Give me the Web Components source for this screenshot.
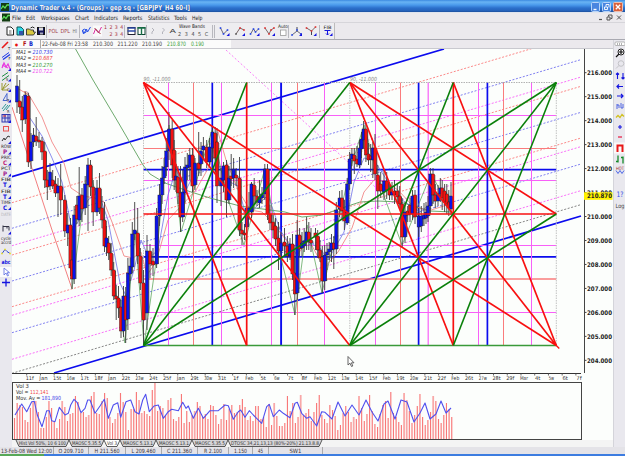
<!DOCTYPE html>
<html>
<head>
<meta charset="UTF-8">
<title>Dynamic Trader</title>
<style>
  html, body { margin: 0; height: 100%; overflow: hidden; }
  body { background: #ebe9ed; font-family: "DejaVu Sans Condensed", "DejaVu Sans", sans-serif; color: #444; }
</style>
</head>
<body>
<trader-app></trader-app>
<script>
const BLUE = '#0b0bee', RED = '#f81010', GREEN = '#0a800a', PINK = '#f860f8', ROSE = '#fa7c7c';

// shared base: subclasses return their styles and markup from render()
class Part extends HTMLElement {
  constructor() {
    super();
    this.attachShadow({ mode: 'open' });
  }
  connectedCallback() {
    this.shadowRoot.innerHTML = this.render();
  }
}

const txt = (x, y, s, len, size, fill, extra = '') =>
  `<text x="${x}" y="${y}" ${len ? `textLength="${len}" lengthAdjust="spacingAndGlyphs"` : ''} font-size="${size}" fill="${fill}" ${extra}>${s}</text>`;
const line = (x1, y1, x2, y2, c, w = 1, extra = '') =>
  `<path d="M${x1} ${y1}L${x2} ${y2}" stroke="${c}" stroke-width="${w}" fill="none" ${extra}/>`;
const poly = (pts, c, w = 1, extra = '') =>
  `<polyline points="${pts}" stroke="${c}" stroke-width="${w}" fill="none" ${extra}/>`;

// each icon is drawn around 0,0
const dots = (c, ...p) => p.map(([x, y]) => `<rect x="${x - .8}" y="${y - .8}" width="1.6" height="1.6" fill="${c}"/>`).join('');
const corner = '<path d="M5 2V5H2Z" fill="#1414e0"/>';
const word = (a, b, c) => txt(-5, -1.2, a, 10, 4.6, '#222') + txt(-1, 4.6, b, 0, 6.2, c, 'font-weight="bold" text-anchor="middle"') + corner;
const ICONS = {
  chart: '<rect x="-4" y="-4" width="8" height="8" fill="#123c12"/>' + poly('-4,2 -2,-1 0,1 2,-2 4,-2', '#5de05d', 1.3),
  page: '<path d="M-3 -4H1L3.5 -1.5V4H-3Z" fill="#fff" stroke="#222"/><path d="M-1 0H1.5M-1 2H1.5" stroke="#444" stroke-width=".8"/>',
  pages: '<path d="M-3 -4H1L3.5 -1.5V4H-3Z" fill="#2cd8e8" stroke="#155"/><path d="M-1 0H3V4H-1Z" fill="#35a"/>',
  folder: '<path d="M-4 4V-2H-1L0 -1H3V1H5L3 4Z" fill="#d8c840" stroke="#333" stroke-width=".9"/><path d="M0 -3Q2 -5 4 -3" stroke="#222" fill="none"/>',
  save: '<rect x="-3.5" y="-3.5" width="7" height="7" fill="#16165c" stroke="#111"/><rect x="-2" y="-3.5" width="4" height="3" fill="#ddd"/><rect x="-1" y="1.5" width="3" height="2" fill="#aab"/>',
  zigBlue: poly('-4,-1 -3,3 0,-2 1,1 4,-4', '#2850e8') + '<circle cx="-2" cy="0" r="1.8" fill="none" stroke="#2850e8"/>',
  zigPink: '<rect x="-4.5" y="-5.5" width="9" height="11" fill="#fafafa"/>' + poly('-4,3 -2,-2 1,2 4,-4', '#d82aa0') + poly('-3,-3 0,0 3,3', '#933'),
  rows: '<rect x="-3.5" y="-3.5" width="7" height="7" fill="#fff" stroke="#223"/><path d="M-4 -3H4M-4 0H4" stroke="#2a48a8" stroke-width="1.4"/>',
  cols: '<rect x="-3.5" y="-3.5" width="7" height="7" fill="#fff" stroke="#143"/><path d="M-4 -3H4M0 -4V4" stroke="#187048" stroke-width="1.4"/>',
  chev: poly('-1,-3 1,-1 -1,1 -1,3', '#b4b4bc'),
  swing1: poly('-4,-3 -1,3 3,-1', '#667') + dots('#2244e8', [-4, -3], [-1, 3], [3, -1]) + corner,
  swing2: poly('-4,3 0,-3 4,-1', '#766') + dots('#e03030', [0, -3], [4, -1]) + dots('#555', [-4, 3]) + corner,
  swing3: poly('-4,3 -1,-2 1,1 4,-2', '#667') + dots('#2244e8', [-4, 3], [-1, -2], [1, 1], [4, -2]) + corner,
  swing4: poly('-5,-3 -1,3 1,-1 4,-3', '#766') + dots('#e03030', [-5, -3], [-1, 3], [1, -1], [4, -3]) + corner,
  swing5: poly('-5,4 0,0 4,3', '#667') + line(0, 0, 0, -4, '#445') + dots('#2244e8', [-5, 4], [0, -1], [4, 3]) + corner,
  swing6: poly('-5,-3 0,0 4,-4', '#766') + line(0, 0, 0, 4, '#445') + dots('#e03030', [-5, -3], [0, 0], [4, -4]) + corner,
  auto: txt(-5, -2.6, 'Auto', 10, 4.8, '#222') + '<rect x="-2.5" y="-1" width="5.5" height="5.5" fill="#fff" stroke="#999" stroke-width=".8"/>',
  fib: txt(-4, -2, 'FIB', 8, 4.6, '#222') + '<path d="M-3 -.5H3M0 -.5V4M-1.5 2.5L0 4L1.5 2.5" stroke="#1414e0" fill="none"/>' + corner,
  // left strip
  redLine: line(-4, 3, 2, -3, '#e81818', 1.6) + txt(2, 4.5, 'T', 0, 4, '#222'),
  channel: line(-4, 2, 3, -3, '#2038e8') + line(-3, 4, 4, -1, '#2038e8', 1.4) + txt(2.5, 4.8, 'F', 0, 4, '#222'),
  pinkZig: poly('-4,2 -2,-3 0,1 2,-2 4,3', '#e838e0', 1.2) + line(-4, -1, 2, 2, '#e838e0') + corner,
  greenCh: line(-4, 0, 2, -4, '#1c8a40') + line(-4, 4, 3, -1, '#1c8a40') + txt(0, 4.6, 'S', 0, 4, '#333') + corner,
  fan: '<path d="M-4 3V-4M-4 3L0 -4M-4 3L3 -3M-4 3H2" stroke="#98982c" fill="none"/>' + txt(1, 4, 'G', 0, 4, '#333') + corner,
  tri: '<path d="M-3 3L1 -4V3Z" stroke="#4868d0" fill="none"/>' + txt(1, 4, 'R', 0, 4, '#224') + corner,
  teal: '<path d="M-4 1L0 -4M-3 3L2 -3M0 2L4 -3" stroke="#2f9a98" fill="none"/>' + txt(1, 4.8, 'R', 0, 4, '#333'),
  grid: '<rect x="-4" y="-3.5" width="8" height="7.5" fill="#dde" stroke="#3038b0"/><path d="M-4 0H4M-1 -4V4M2 -4V4" stroke="#3038b0"/><path d="M-3 -2H0" stroke="#d02030"/>' + corner,
  box: '<rect x="-2.5" y="-2" width="5" height="4.5" fill="none" stroke="#e85050"/>',
  zig: poly('-4,2 -2,-1 -1,1 2,-3 4,-2', '#333', 1) + corner,
  row: word('ROW', 'P', '#a01890'), pric: word('PRIC', 'C', '#c02078'), pct: word('PCT', 'P', '#a01890'),
  fibT: word('FIB', 'T', '#1414e0'), time: word('TIME', 'C', '#1414e0'),
  date: txt(-5, 1, 'DATE', 10, 4.4, '#b8b8bc'),
  tee: '<path d="M-3 -4V2M-3 -3H3V1M1 -3V-1" stroke="#334" fill="none"/>' + corner,
  cycle: txt(-5, -.6, 'cycle', 10, 4.6, '#222') + txt(-5, 3.8, 'accrd', 10, 4.6, '#222'),
  wave: poly('-4,2 -1,-2 1,0 4,2', '#3048d8') + dots('#e8e020', [-4, 2], [-1, -2], [4, 2]),
  abc: txt(-4.5, 2, 'abc', 9, 5.6, '#1414e0', 'font-weight="bold"'),
  arrow: '<rect x="-6" y="-5" width="11.5" height="10" fill="#fbfbfd"/><path d="M-2 -4V3L0 1L1.5 4L2.5 3.5L1.2 .7H3.5Z" fill="#fff" stroke="#5868e0" stroke-width=".8"/>',
  plus: '<path d="M-4 0H4M0 -4V4" stroke="#1414e0" stroke-width="1.3"/>',
  // right strip
  grip: '<rect x="-5" y="-2" width="10" height="3.5" rx="1" fill="#fff" stroke="#999" stroke-width=".7"/><path d="M-3 0H3" stroke="#666" stroke-dasharray="1 1"/>',
  lens: '<circle cx="1" cy="-1" r="3" fill="#fff" stroke="#222"/><path d="M-1 1L-4 4M-1 -1H3M1 -3V1" stroke="#111" stroke-width="1.2"/>',
  lensOff: '<circle cx="1" cy="-1" r="2.8" fill="none" stroke="#c4c4c8"/><path d="M-1 1L-4 4" stroke="#c4c4c8"/>',
  updown: '<path d="M-2.5 3V-3M-4 -1.5L-2.5 -3L-1 -1.5M3 -3V3M1.5 1.5L3 3L4.5 1.5" stroke="#1414e0" fill="none" stroke-width="1.1"/>',
  left: '<path d="M3 0H-3M-1 -2L-3 0L-1 2" stroke="#1414e0" fill="none" stroke-width="1.2"/>',
  right: '<path d="M-3 0H3M1 -2L3 0L1 2" stroke="#1414e0" fill="none" stroke-width="1.2"/>',
  bars: '<path d="M-3 -2V3M-3 -1H-1V2M1 -3V2H3V-2" stroke="#4058e0" fill="none" stroke-width=".9"/>',
  gold: poly('-4,1 -2,-1 0,1 2,-2 4,0', '#d0c020', 1.3),
  plusS: '<path d="M-2 0H2M0 -2V2" stroke="#1414e0" stroke-width="1.1"/>',
  minus: '<path d="M-2 0H2" stroke="#e81840" stroke-width="1.2"/>',
  magnet: '<rect x="-6" y="-5.5" width="12" height="11" fill="#fafafa"/><path d="M-2.5 4V-2.5H2.5V4" stroke="#e81818" fill="none" stroke-width="2"/>',
  ohlc: '<path d="M-2 -4V3M-4 2H-2M3 -3V4M1 -2H3" stroke="#148a28" fill="none" stroke-width="1.3"/>',
  hot: txt(-4, -.5, 'HOT', 8, 4.6, '#a02828') + poly('-4,0 -2,3 0,0 2,3 4,0', '#5068e8'),
  help: txt(-3.5, 2.8, '1?', 7, 7.5, '#3050e8'),
  log: txt(-4.5, 2, 'Log', 9, 6, '#444')
};

class ToolIcon extends Part {
  render() {
    const w = +this.getAttribute('w') || 12, h = +this.getAttribute('h') || 12;
    return `<style>:host{display:block;flex:none;width:${w}px;height:${h}px}svg{display:block;overflow:visible}</style>
      <svg width="${w}" height="${h}" viewBox="${-w / 2} ${-h / 2} ${w} ${h}">${ICONS[this.getAttribute('name')]}</svg>`;
  }
}
const icon = (name, w, h) => `<tool-icon name="${name}" w="${w}" h="${h}"></tool-icon>`;

class TitleBar extends Part {
  render() {
    return `<style>
      :host{display:flex;align-items:center;box-sizing:border-box;height:13px;padding:0 1px;gap:2px;color:#fff;
        background:linear-gradient(#3c8ae0 0,#69b4f4 2px,#4a9aec 5px,#2c70cc 8px,#2461b8 11px,#1c4c98 12px,#dfe4ee 12px)}
      svg{display:block} .t{width:184px;flex:none;overflow:visible} .sp{flex:1} .b{display:flex;gap:2px;padding-right:1px}
      text{text-shadow:.5px .5px 0 #123a80}
    </style>${icon('chart', 8, 10)}
    <svg class="t" height="12">${txt(0, 8.8, this.textContent, 179, 7, '#f2f7ff', 'font-weight="bold"')}</svg>
    <span class="sp"></span>
    <span class="b"><svg width="9" height="10"><rect x=".5" y=".5" width="8" height="9" rx="1" fill="#4a86e0" stroke="#b8d4f8"/><path d="M2.5 7.5H5.5" stroke="#fff" stroke-width="1.4"/></svg>
    <svg width="9" height="10"><rect x=".5" y=".5" width="8" height="9" rx="1" fill="#4a86e0" stroke="#b8d4f8"/><path d="M2.5 5H5.5V7.5H2.5ZM4 4.5V2.5H7V5.5" stroke="#fff" fill="none" stroke-width=".9"/></svg>
    <svg width="10" height="10"><rect x=".5" y=".5" width="9" height="9" rx="1" fill="#d8603c" stroke="#f0c0b0"/><path d="M2.8 2.8L7.2 7.2M7.2 2.8L2.8 7.2" stroke="#fff" stroke-width="1.3"/></svg></span>`;
  }
}

class MenuBar extends Part {
  render() {
    return `<style>
      :host{display:flex;height:9px;padding-left:2px;align-items:center;background:#ebe9ed}
      nav{display:grid;grid-template-columns:14px 15px 34px 19px 29px 25px 26px 18px 20px;padding-left:2px;flex:1}
      svg{display:block;height:9px;width:100%;overflow:visible} .w{width:27px;flex:none}
    </style>${icon('chart', 8, 9)}<nav>${[['File', 9], ['Edit', 9], ['Workspaces', 28.5], ['Chart', 14], ['Indicators', 24], ['Reports', 19.5], ['Statistics', 21.5], ['Tools', 13], ['Help', 10.5]]
      .map(([s, w]) => `<svg>${txt(0, 6.8, s, w, 6, '#222')}</svg>`).join('')}</nav>
    <svg class="w"><path d="M1 6.5H4" stroke="#555" stroke-width="1.2"/><path d="M9 4H12V7H9ZM10.5 3.5V2H14V5.5H12.5M19 2.5L23 6.5M23 2.5L19 6.5" stroke="#555" fill="none"/></svg>`;
  }
}

class ToolBar extends Part {
  render() {
    const sep = '<i></i>';
    const label = (s, w, c) => `<svg width="${w}" height="10">${txt(.5, 7.3, s, w - 2.5, 5.6, c)}</svg>`;
    const nums = '<svg width="21" height="16">' + [...'1234'].map((n, i) => txt(1 + i * 5.4, 6, n, 0, 5.2, '#a82838')).join('') +
      [...'234'].map((n, i) => txt(6.4 + i * 5.4, 13, n, 0, 5.2, '#a82838')).join('') + '</svg>';
    const waves = '<svg width="34" height="16">' + txt(1, 5, 'Wave Bands', 26, 5, '#222') +
      [...'2345C'].map((n, i) => txt(i * 6.7, 13, n, 0, 5.4, '#444')).join('') + '</svg>';
    return `<style>
      :host{display:flex;height:18px;box-sizing:border-box;border-bottom:1px solid #a9a9b1;border-top:1px solid #d6d5da}
      div{display:flex;align-items:center;height:16px;background:#eeedf0;padding-left:5px;border-right:1px solid #bbb}
      i{width:1px;height:13px;background:#b8b8be;flex:none;margin-right:1px} svg{display:block;flex:none;overflow:visible}
    </style><div>${icon('page', 10, 12)}${icon('pages', 10, 12)}${icon('folder', 11, 12)}${icon('save', 10, 12)}${sep}
      ${label('POL', 12, '#a03848')}${label('DPL', 12, '#a03848')}${label('HI', 7, '#777')}${sep}
      ${icon('zigBlue', 11, 12)}${icon('zigPink', 11, 12)}${nums}${sep}${icon('rows', 11, 12)}${icon('cols', 9, 12)}${sep}
      ${icon('chev', 10, 12)}${icon('chev', 11, 12)}${label('A', 9, '#444')}${waves}${sep}${sep}
      ${icon('swing1', 17, 12)}${icon('swing2', 14, 12)}${icon('swing3', 15, 12)}${icon('swing4', 16, 12)}${icon('auto', 10, 12)}${sep}
      ${icon('swing5', 14, 12)}${icon('swing6', 15, 12)}${sep}${icon('fib', 13, 12)}</div>`;
  }
}

class SideTools extends Part {
  render() {
    const list = this.textContent.trim().split(/\s+/).map(s => s.split(':'));
    return `<style>:host{display:flex;flex-direction:column;background:#e9e8ee;width:12px;overflow:hidden}
      :host([right]){border-left:1px solid #d4d4da;width:11px} </style>
      ${list.map(([n, h]) => n === 'gap' ? `<div style="flex:none;height:${h}px"></div>` : icon(n, 12, h)).join('')}`;
  }
}

class InfoRow extends Part {
  render() {
    const t = [['●', 15, 3, '#e81010', 4], ['F', 23, 3.5, '#b01010', 6.4], ['B', 29, 4, '#1428c8', 6.4], ['22-Feb-08 Fri 23:58', 42, 46, '#443c40', 6],
      ['210.300', 93, 20, '#443c40', 6], ['211.220', 117.5, 20, '#443c40', 6], ['210.190', 142, 20, '#443c40', 6], ['210.870', 167, 19, '#38a038', 6], ['0.190', 191, 13, '#38a038', 6]];
    return `<style>:host{display:block;height:8px;border-bottom:1px solid #c9c9cf;background:#ebe9ed} svg{display:block}</style>
      <svg width="600" height="8" viewBox="12 0 600 8"><rect x="12" width="219" height="8" fill="#fbfbfb"/>
      <path d="M40.5 0V8" stroke="#aaa"/>${t.map(([s, x, w, c, f]) => txt(x, 6, s, w, f, c, f > 6.1 ? 'font-weight="bold"' : '')).join('')}</svg>`;
  }
}

// x, body top, body bottom, direction (1 = up), high, low
const CANDLES = [
  [17,86,102,1,75,113],[19.7,101,107,0,80,114],[22.3,107,120,0,96,132],[25.3,95,119,1,92,124],[28.4,96,162,0,93,167],[31,142,161,1,133,169],
  [33.5,135,142,1,128,147],[36.2,136,141,0,117,146],[39,140,142,0,132,148],[42,141,152,0,137,160],[44.7,151,180,0,142,188],[47.3,180,187,0,170,200],
  [50,172,186,1,163,190],[52.7,180,186,0,170,189],[55.5,184,193,0,176,197],[58,186,193,1,178,217],[60.7,186,200,0,164,215],[64.8,200,231,0,195,237],
  [67.7,225,233,1,213,246],[70.5,225,268,0,218,276],[72,260,279,0,250,289],[74.2,215,279,1,206,284],[76.8,205,219,0,196,224],[79.2,196,220,1,167,226],
  [82,195,209,0,188,222],[85.2,184,208,1,176,215],[88,165,185,1,158,231],[90.5,165,187,0,160,196],[93.2,187,212,0,180,226],[97,188,212,1,180,216],
  [99.5,188,208,0,173,214],[102,208,220,0,196,228],[104.5,220,246,0,202,252],[106.5,238,247,1,226,256],[108.7,243,253,0,236,260],[111.2,253,270,0,243,276],
  [113.7,270,296,0,262,300],[116.2,296,299,0,285,320],[118.5,298,308,0,286,318],[121,307,331,0,300,338],[123.5,296,331,1,286,337],[125.7,296,320,0,287,343],
  [127.9,273,319,1,258,330],[130.2,266,274,1,258,281],[132.3,234,267,1,222,273],[134.7,230,234,1,202,240],[137.7,233,256,0,208,264],[140.4,256,283,0,248,290],
  [143.5,283,320,0,270,345],[147,251,313,1,235,330],[150,251,264,0,244,278],[153,261,265,0,248,276],[156.6,216,264,1,208,268],[159.5,195,216,1,184,226],
  [162,178,195,1,166,204],[164.1,167,178,1,158,184],[166.3,151,167,1,138,176],[169,129,151,1,112,160],[172.2,129,165,0,120,178],[174.2,150,180,0,140,190],
  [176,176,180,1,164,192],[178,177,193,0,166,204],[180.5,193,217,0,166,232],[182.7,192,217,1,170,222],[185,167,193,1,157,203],[187.3,165,168,1,153,180],
  [189.8,155,167,1,148,180],[192.5,155,186,0,148,192],[195,163,185,1,158,190],[198.7,163,169,0,132,176],[201,151,164,1,142,176],[203.4,146,150,1,137,160],
  [206.7,147,162,0,140,168],[209.5,147,162,1,138,167],[212.5,132,148,1,126,160],[215.2,133,158,0,127,172],[217,142,186,0,128,203],[221,178,186,1,168,206],
  [223.5,166,180,1,162,192],[226.5,165,200,0,160,217],[229,178,200,1,166,204],[231.2,176,179,0,154,186],[233.6,169,178,1,158,188],[236.2,175,178,0,168,186],
  [239.5,178,230,0,157,236],[242,230,234,0,222,245],[244.5,233,235,0,224,240],[246.7,208,227,1,200,240],[249,208,211,1,192,220],[251.5,184,212,1,182,218],
  [254.2,185,196,0,178,204],[257,196,202,0,190,206],[259.5,197,203,1,180,208],[262,194,198,1,187,204],[264.8,169,194,1,164,200],[267.5,169,214,0,164,220],
  [270,214,223,0,205,230],[273,222,230,0,215,238],[275.5,226,239,0,218,246],[278.5,238,251,0,222,270],[281,243,251,1,232,258],[284.5,242,246,0,228,256],
  [287.4,246,256,0,236,262],[290,244,256,1,238,260],[292.5,244,274,0,234,280],[294.8,273,294,0,258,315],[297.2,235,293,1,220,300],[299.6,235,249,0,228,256],
  [302,243,248,1,232,256],[304.2,241,246,1,228,252],[306.6,232,242,1,217,250],[308.8,232,241,0,222,250],[311,240,243,0,228,252],[315.5,233,237,0,228,250],
  [317.7,236,250,0,230,258],[320,250,258,0,240,262],[322.3,257,281,0,246,293],[324.7,255,281,1,245,290],[327,252,255,1,243,270],[329.2,249,252,1,242,260],
  [331.5,243,250,1,234,262],[333.8,243,249,0,236,269],[336.3,210,249,1,202,254],[339.6,198,209,1,191,217],[342,198,211,0,190,220],[344.4,210,221,0,200,230],
  [347.2,184,223,1,178,225],[349.6,159,184,1,152,190],[351.9,154,159,1,148,166],[354.3,155,161,0,148,174],[357,159,164,0,146,167],[359.5,148,165,1,140,168],
  [361.5,139,149,1,132,158],[363.6,129,140,1,121,148],[365.9,129,155,0,122,162],[368.5,154,160,0,143,165],[370.7,156,159,0,144,172],[372.8,148,160,1,142,178],
  [375,148,174,0,134,180],[377.8,175,191,0,165,209],[380.7,184,191,0,172,198],[384,181,192,1,170,200],[386.7,181,190,0,172,199],[389.5,189,195,0,182,200],
  [392,192,195,1,182,200],[394.5,191,195,0,180,204],[397.3,191,197,0,184,204],[399.7,196,204,0,186,210],[402.2,204,237,0,198,247],[405,212,237,1,202,243],
  [407.7,211,215,0,206,222],[410,205,214,0,198,222],[412.5,196,214,1,190,220],[415,195,217,0,190,224],[418.7,216,227,1,208,237],[421.3,216,226,1,206,232],
  [424,215,219,1,203,226],[426,212,218,1,202,224],[428,206,216,1,196,222],[430.4,174,206,1,168,214],[433,174,195,0,168,204],[435.3,195,201,0,184,208],
  [438,194,201,1,185,206],[440.3,188,194,1,178,202],[442.2,188,198,0,180,210],[444.6,191,202,0,184,212],[446.8,194,204,0,184,214],[448.8,202,208,0,190,216],[451,196,209,1,182,215]
];

class PriceChart extends Part {
  render() {
    let s = '';
    // parallels of the channel, y taken at the left edge
    [[202.7, ROSE], [228.3, '#7272ee'], [245.7, PINK], [255, ROSE], [281, '#7272ee'], [306.7, ROSE], [315.3, PINK], [332.7, '#7272ee'], [359.3, PINK], [373.3, '#777']]
      .forEach(([y, c]) => s += line(12, y, 581, y - 168.7, c, .9, 'stroke-dasharray="2 1.6"'));
    s += line(226, 50, 385, 196, PINK, .8, 'stroke-dasharray="2 2"');
    s += line(12, 176.7, 444, 49, BLUE, 1.7) + line(54, 373, 581, 216, BLUE, 1.7);

    // time and price divisions of the squares
    const L = 143.5, M = 349.8, R = 556.3, T = 82.5, B = 345.5, H1 = 246.7, H2 = 453.3, C = 214;
    [[115.5, PINK, 1], [148.5, ROSE, 1], [180.5, PINK, 1], [245.5, PINK, 1], [279, ROSE, 1.3], [312.5, PINK, 1], [169.6, BLUE, 1.6], [256.8, BLUE, 1.8]]
      .forEach(([y, c, w]) => s += line(L, y, R, y, c, w));
    [[168.5, PINK], [193.5, ROSE], [221.5, PINK], [271.5, PINK], [297.5, ROSE], [324.5, PINK], [375.5, PINK], [400.5, ROSE], [428.2, PINK, 1.2], [478.5, PINK], [503.5, ROSE], [531.5, PINK],
      [212.3, BLUE, 1.7], [281.1, BLUE, 1.9], [418.6, BLUE, 1.7], [487.4, BLUE, 1.7]]
      .forEach(([x, c, w]) => s += line(x, T, x, B, c, w || 1));
    s += line(L, T, R, T, '#aaa', .9, 'stroke-dasharray="1.5 1"');
    [L, M, R].forEach(x => s += line(x, T, x, B, '#bbb', .9, 'stroke-dasharray="1.5 1"'));

    // moving averages and swing lines
    s += poly('75,48 93,80 118,122 143,165 150,174 165,183 185,190 210,198 240,206 270,210 285,212 302,217 322,215 345,207 360,202 378,201 400,202 430,211 452,212', '#5ea05e', .9);
    s += poly('12,107 52,230 71.7,288', '#f07070', .9);
    s += poly('17,88 29,95 42,117 52,142 64,163 71,188 83,196 95,198 104,202 112,222 124,256 133,258 141,252 147,275 156,262 168,220 182,205 196,190 210,165 218,132 226,160 238,190 250,210 262,212 272,222 286,240 297,255 309,240 324,268 338,252 352,228 364,192 374,180 386,182 398,190 412,205 428,211 450,204', '#f07878', .8);
    s += poly('30,118 42,136 52,158 62,182 67,205 72,230 78,222 88,200 98,192 108,220 120,283 126,296 134,270 141,240 149,258 158,250 168,195 176,170 186,190 196,170 208,154 216,160 226,180 238,186 246,216 258,205 268,195 280,230 294,250 304,240 320,248 328,260 344,232 354,182 364,158 374,160 388,182 402,200 420,212 436,200 452,202', '#6f70e8', .8);
    s += poly('72,289 88,166 102,215 125,343 135,231 144,345 156,262 169,125 181,232 212,130 228,200 244,245 265,168 279,250 295,315 307,225 322,293 350,170 364,125 380,185 402,245 431,174 451,209', '#4c9c4c', .7);

    for (const [x, a, b, up, hi, lo] of CANDLES) {
      s += line(x, hi, x, lo, '#3c3c3c', .9);
      s += line(x + 1.8, a + 1, x + 1.8, b, '#444', .8);
      s += `<rect x="${x - 1.6}" y="${a}" width="3.1" height="${Math.max(b - a, 1.5)}" fill="${up ? '#0a12ea' : '#f41010'}" stroke="#222" stroke-width=".4"/>`;
    }

    // main levels and fans stay above the candles
    s += line(L, C, R, C, RED, 1.7) + line(H1, T, H1, B, RED, 1.7) + line(H2, T, H2, B, RED, 1.7) + line(L, B, R, B, '#3a9a3a', 1.3);
    [[L, T, H1, B], [L, T, M, B], [L, T, R, B], [M, T, H2, B], [M, T, R, B], [M, T, R, C], [H2, T, R, B]].forEach(p => s += line(...p, RED, 1.7));
    [[L, B, H1, T], [L, B, M, T], [L, B, R, T], [M, B, H2, T], [M, B, R, T], [M, B, R, C], [H2, B, R, T]].forEach(p => s += line(...p, GREEN, 1.6));
    s += line(R - 4, B - 4, R + 3, B + 3, RED, 1.3);

    s += txt(143.5, 80.8, '90, -11.000', 27, 5.6, '#888', 'font-style="italic"') + txt(350, 80.8, '90, -11.000', 27, 5.6, '#888', 'font-style="italic"');
    [['MA1', '210.730', '#3838e8'], ['MA2', '210.687', '#f04040'], ['MA3', '210.270', '#389838'], ['MA4', '210.722', '#f048f0']].forEach(([n, v, c], i) => {
      s += txt(16, 54 + i * 6.3, n + ' =', 15.5, 5.6, '#333', 'font-style="italic"') + txt(32.5, 54 + i * 6.3, v, 20, 5.6, c, 'font-style="italic"');
    });
    s += txt(24, 95, 'Th', 5, 5, '#944');

    // price scale
    s += line(584.5, 49, 584.5, 373, '#444', 1);
    for (let i = 0; i < 13; i++) {
      const y = 72.7 + i * 23.97;
      s += line(584.5, y, 586.5, y, '#444') + txt(587, y + 2.3, (216 - i) + '.000', 25, 6.3, '#222', 'font-weight="bold"');
    }
    s += '<rect x="584" y="192.3" width="28.5" height="7.5" fill="#fff200"/>' + txt(587, 198.3, '210.870', 25, 6.3, '#222', 'font-weight="bold"');

    // time scale
    s += line(12, 373.5, 581, 373.5, '#333', 1);
    const days = '11f Jan 15t 16w 17t 18f Jan 22t 23w 24t 25f Jan 29t 30w 31t 1f Feb 5t 6w 7t 8f Feb 12t 13w 14t 15f Feb 19t 20w 21t 22f Feb 26t 27w 28t 29f Mar 4t 5w 6t 7f'.split(' ');
    days.forEach((d, i) => {
      const x = 29.7 + i * 13.73;
      s += line(x - 3, 373, x - 3, 375.5, '#444', .8) + txt(x - d.length * 1.35, 380, d, d.length * 2.7, 5.3, '#333');
    });
    s += '<path d="M348 356.5V365L350 363.2L351.5 366.5L352.8 366L351.4 362.8H354Z" fill="#fff" stroke="#555" stroke-width=".9"/>';
    return `<style>:host{display:block;background:#fcfefc} svg{display:block}</style>
      <svg width="601" height="333" viewBox="12 49 601 333">${s}</svg>`;
  }
}

const VOLUME = [21,36,34,32,19,17,31,37,38,27,11,11,22,38,31,17,11,20,38,32,18,25,26,43,37,26,27,22,24,43,47,26,25,38,46,41,22,16,20,26,46,37,27,9,30,30,47,39,26,28,25,23,49,56,28,33,31,24,39,41,20,18,22,45,16,28,17,24,28,37,33,22,25,20,34,33,24,15,20,35,19,30,34,26,27,34,40,32,19,23,18,33,33,20,22,12,35,14,36,23,13,13,16,43,28,36,16,22,44,24,26,30,18,27,36,44,24,20,16,34,29,23,9,14,26,33,27,17,22,20,43,31,18,25,44,28,15,12,25,34,38,21,47,26,22,17,14,46,39,28,16,24,33,45,22,14,19,27,43,38,20,16,24,36,30,22];
const VOL_MA = '15,415 21.7,404 26.7,411.7 31.7,401.7 34.3,401.3 37.3,415 42,426.7 46.7,410.7 49.3,410.7 51.7,420.7 55,421.7 59.3,407.3 65,415 68.3,413.3 70.7,405 74,399.3 77.3,402.7 81,412.7 85,408.3 87.7,400 90,400 95,413.3 100,406 104.3,399.3 108.3,418.3 113.3,405 117.7,402.7 120.7,417.3 126,401.7 130.7,400 135,411.7 139,414 142.7,400 145.7,394.3 149.3,411.7 154,406 158.3,405 163.3,418.3 168.3,411.7 171.7,409.3 178.3,410.7 182.7,402.3 186,408.3 188.3,406 193.3,418.3 198.3,408.3 203.3,418.3 210,410.7 218.3,410.7 225,405 228.3,405.7 233.3,419.3 238.3,411.7 240.7,410 245,417.3 249.3,410.7 253.3,415 261.7,423.3 266.7,406.7 269.3,404.3 273.3,416.7 279.3,410 283.3,413.3 290,417.7 295,403.3 297.3,402.3 301.7,413.3 306.7,418.3 310,416.7 316.7,426 321.7,411.7 325,412.3 332,419 338,402 345,416 352,405 359,415 366,400 372,412 378,421 384,404 388,401 395,419 401,400 407,402 414,422 420,413 425,403 430,419 436,414 441,401 446,413 451,408';

class VolumePane extends Part {
  render() {
    let s = VOLUME.map((v, i) => {
      const x = 14.5 + i * 2.65;
      return x > 452 ? '' : line(x, 439, x, 439 - v, i % 10 === 8 ? '#f8a8a8' : '#f87878', i % 10 === 8 ? 1.8 : 1.15);
    }).join('');
    s += poly(VOL_MA, '#5050ee', 1.1, 'stroke-linejoin="round"');
    s += txt(16, 388, 'Vol 3', 13, 5.6, '#333') + txt(16, 394, 'Vol =', 12.5, 5.6, '#333') + txt(30, 394, '112,141', 18.5, 5.6, '#f04848') +
      txt(16, 400, 'Mov. Av =', 24.5, 5.6, '#333') + txt(41.5, 400, '181,890', 19.5, 5.6, '#4040e8');
    return `<style>:host{display:block;background:#fcfefc} svg{display:block}</style>
      <svg width="601" height="58" viewBox="12 382 601 58">${s}<rect x="12.5" y="382.5" width="569" height="57" fill="none" stroke="#444"/></svg>`;
  }
}

class PaneTabs extends Part {
  render() {
    const tabs = [['Hist Vol 50%, 10 6 100', 53], ['MAOSC 5.35.5', 35], ['Vol 3', 16], ['MAOSC 5.13.1', 36], ['MAOSC 5.13.1', 36], ['MAOSC 5.35.5', 36], ['DTOSC 34,21,13,13 (80%-20%) 21.13.8.8', 94]];
    return `<style>:host{display:flex;height:7px;padding-left:4px;background:#f4f4f4} svg{display:block;flex:none;overflow:visible}</style>
      ${tabs.map(([t, w], i) => `<svg width="${w}" height="7"><path d="M0 0L3 6.5H${w - 3}L${w} 0" fill="${i === 2 ? '#fff' : '#d6d5d8'}" stroke="#333" stroke-width=".8"/>${txt(3, 5, t, w - 6, 5.2, '#333')}</svg>`).join('')}`;
  }
}

class StatusBar extends Part {
  render() {
    const cells = [['13-Feb-08 Wed 12:00', 54, 51], ['O 209.710', 35, 25], ['H 211.560', 37, 25], ['L 209.460', 36, 24], ['C 211.360', 36, 25], ['R 2.100', 31, 18], ['1.150', 24, 13], ['45', 16, 5], ['SW1', 54, 12]];
    return `<style>:host{display:flex;height:7px;background:#e4e3e8;border-style:solid;border-width:0 0 2px;border-image:linear-gradient(90deg,#58a858 0 46px,#3c7ce0 46px) 2}
      svg{display:block;flex:none;box-sizing:border-box;border-right:1px solid #aaa;overflow:visible}</style>
      ${cells.map(([t, w, l]) => `<svg width="${w}" height="7">${txt((w - 1 - l) / 2, 5.6, t, l, 5.8, '#3c3438')}</svg>`).join('')}`;
  }
}

class TraderApp extends Part {
  render() {
    return `<style>
      :host{display:flex;flex-direction:column;width:625px;height:456px;overflow:hidden}
      main{display:flex;height:407px;flex:none} section{width:601px;flex:none}
    </style>
    <title-bar>Dynamic Trader v.4 - (Groups) - gep sq - [GBPJPY_H4 60-I]</title-bar>
    <menu-bar></menu-bar><tool-bar></tool-bar>
    <main>
      <side-tools>redLine:10 channel:11 pinkZig:10 greenCh:11 fan:10 tri:11 teal:10 grid:10 box:11 zig:10 row:11 pric:11 pct:11 fibT:11 fibT:12 time:10 date:10 gap:4 tee:11 cycle:11 wave:11 abc:10 arrow:10 plus:11</side-tools>
      <section><info-row></info-row><price-chart></price-chart><volume-pane></volume-pane><pane-tabs></pane-tabs></section>
      <side-tools right>gap:1 grip:6 lens:12 lensOff:11 updown:12 left:9 right:10 bars:10 gold:11 plusS:10 minus:10 magnet:12 ohlc:11 hot:11 gap:12 help:13 log:10</side-tools>
    </main>
    <status-bar></status-bar>`;
  }
}

customElements.define('tool-icon', ToolIcon);
customElements.define('title-bar', TitleBar);
customElements.define('menu-bar', MenuBar);
customElements.define('tool-bar', ToolBar);
customElements.define('side-tools', SideTools);
customElements.define('info-row', InfoRow);
customElements.define('price-chart', PriceChart);
customElements.define('volume-pane', VolumePane);
customElements.define('pane-tabs', PaneTabs);
customElements.define('status-bar', StatusBar);
customElements.define('trader-app', TraderApp);
</script>
</body>
</html>
